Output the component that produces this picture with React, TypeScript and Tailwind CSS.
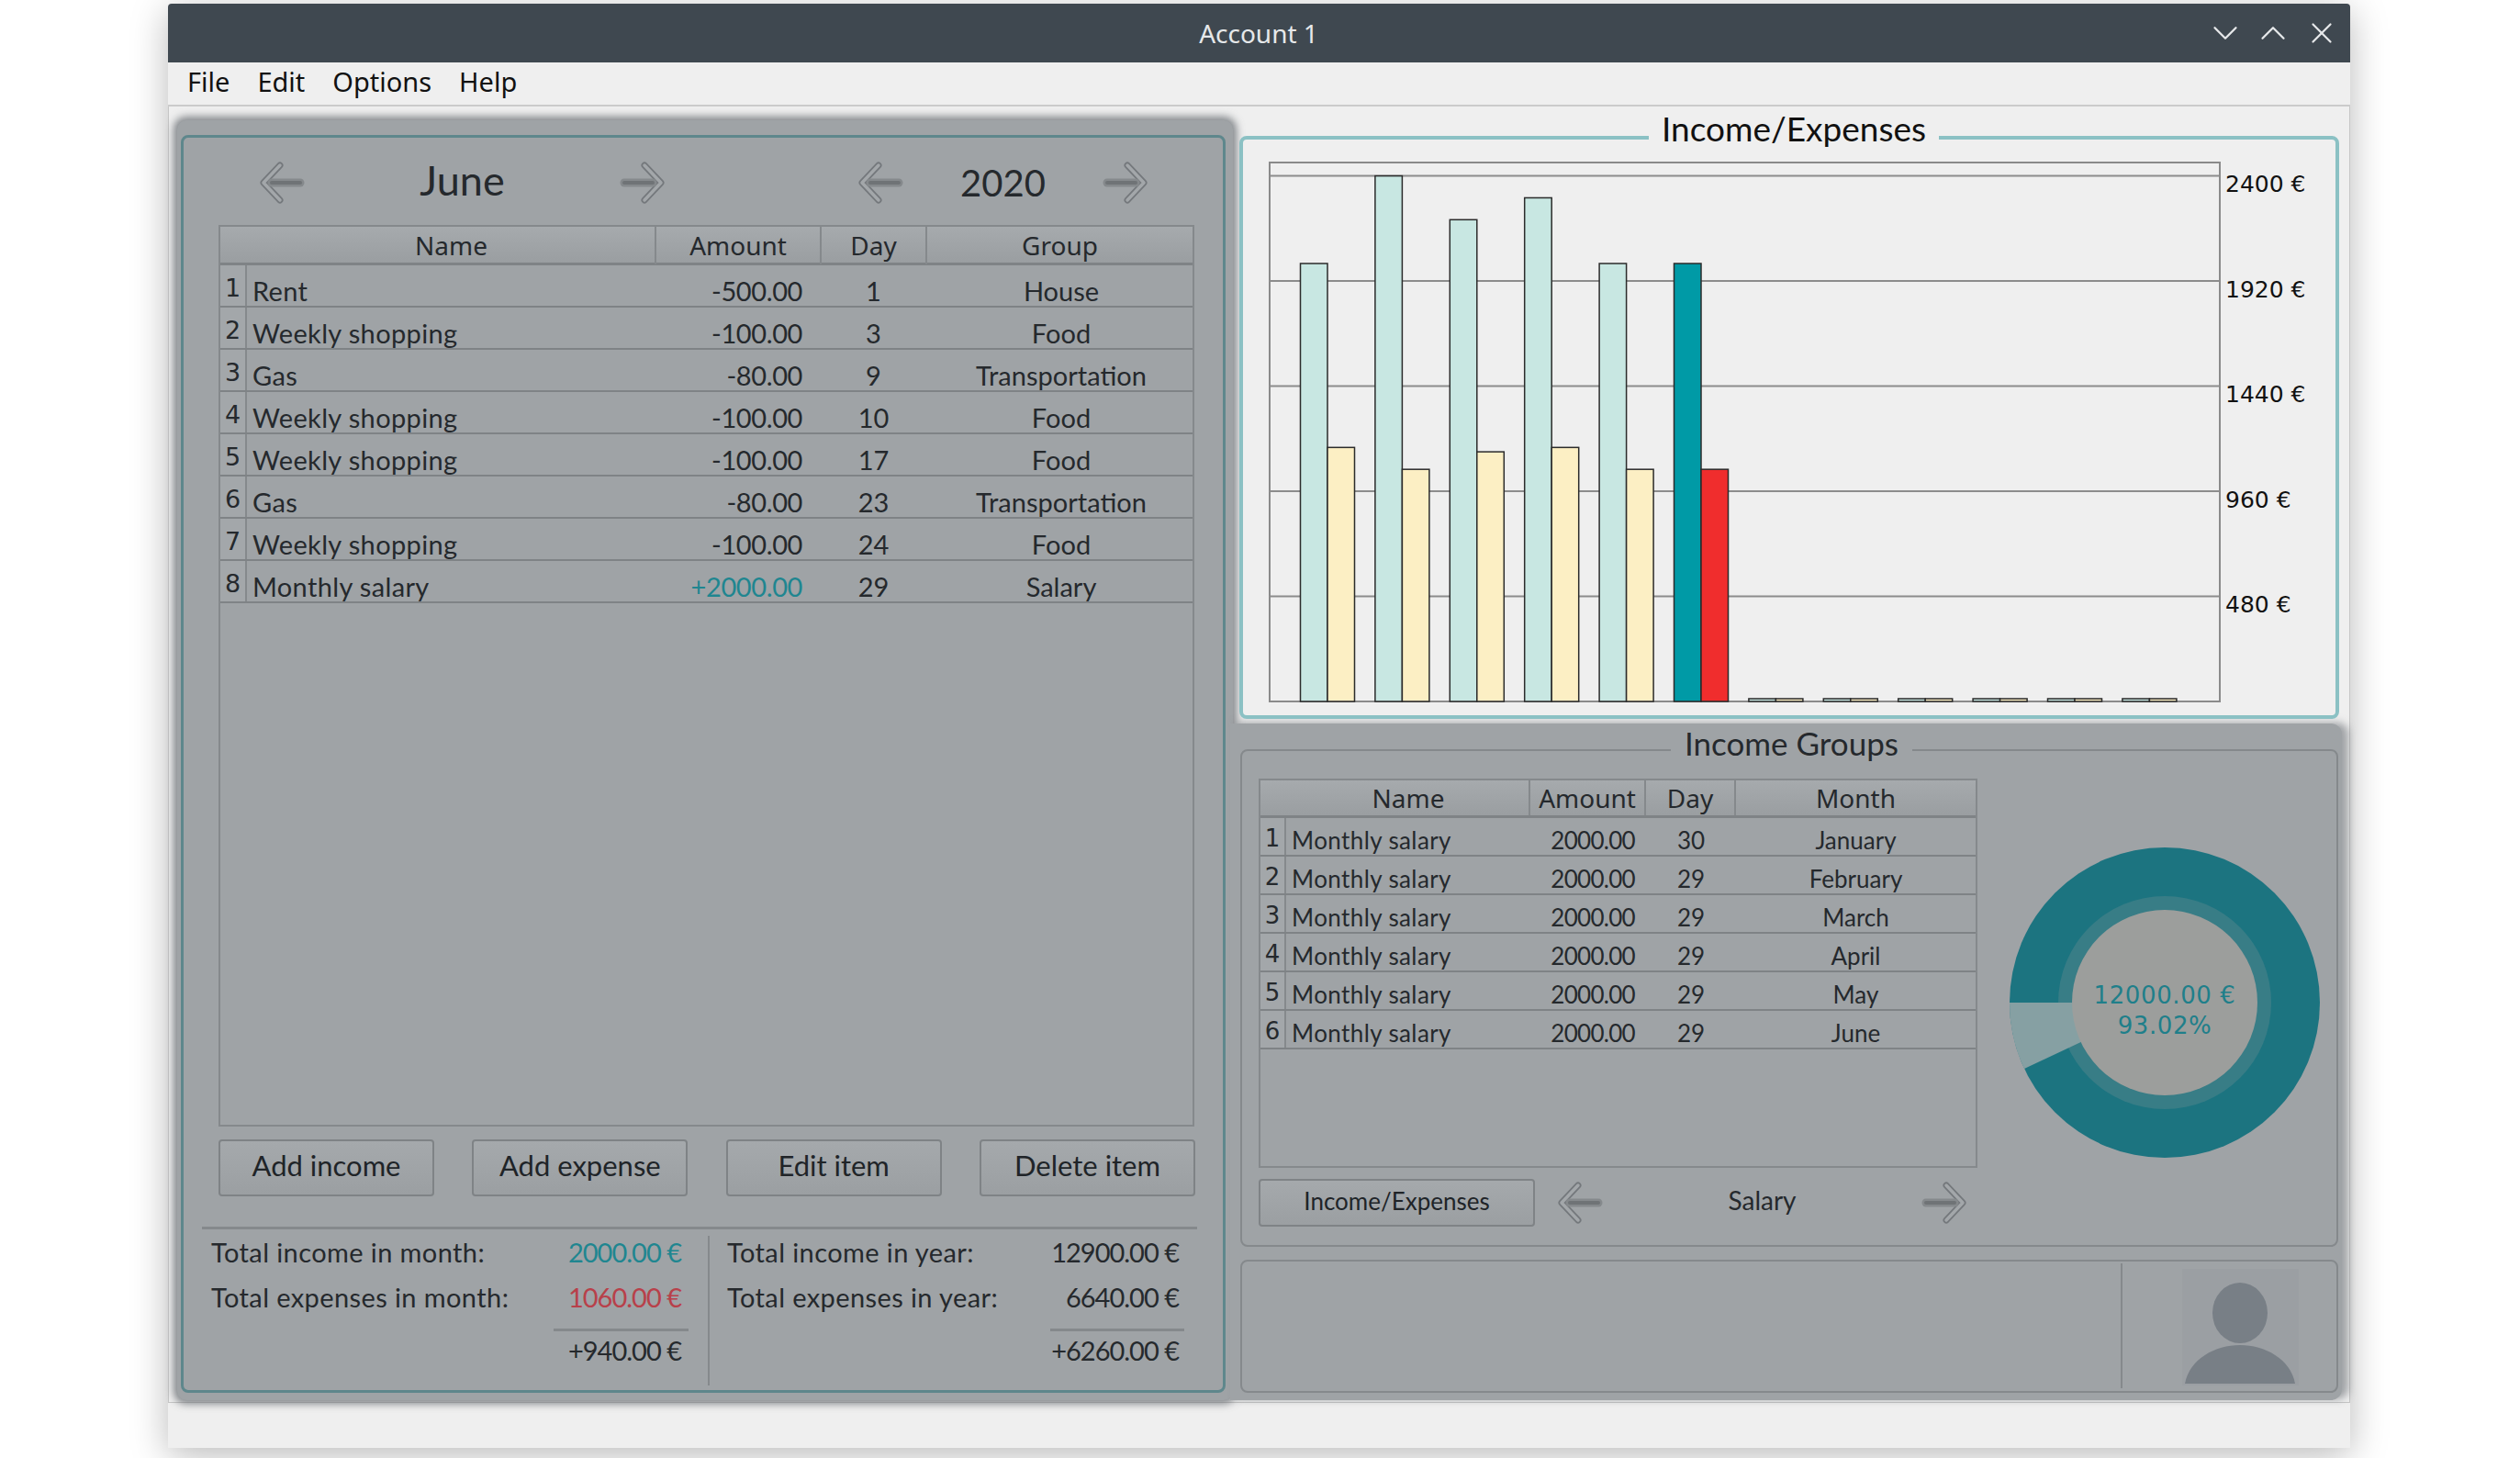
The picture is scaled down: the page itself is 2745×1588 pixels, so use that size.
import React from "react";
import { ChevronDown, ChevronUp, X } from "lucide-react";

const LEFT_ROWS = [
  ["Rent", "-500.00", "1", "House"],
  ["Weekly shopping", "-100.00", "3", "Food"],
  ["Gas", "-80.00", "9", "Transportation"],
  ["Weekly shopping", "-100.00", "10", "Food"],
  ["Weekly shopping", "-100.00", "17", "Food"],
  ["Gas", "-80.00", "23", "Transportation"],
  ["Weekly shopping", "-100.00", "24", "Food"],
  ["Monthly salary", "+2000.00", "29", "Salary"],
];

const GROUP_ROWS = [
  ["Monthly salary", "2000.00", "30", "January"],
  ["Monthly salary", "2000.00", "29", "February"],
  ["Monthly salary", "2000.00", "29", "March"],
  ["Monthly salary", "2000.00", "29", "April"],
  ["Monthly salary", "2000.00", "29", "May"],
  ["Monthly salary", "2000.00", "29", "June"],
];

const INCOME = [2000, 2400, 2200, 2300, 2000, 2000, 0, 0, 0, 0, 0, 0];
const EXPENSE = [1160, 1060, 1140, 1160, 1060, 1060, 0, 0, 0, 0, 0, 0];
const GRID = [2400, 1920, 1440, 960, 480];

const Arrow = ({ dir }: { dir: "left" | "right" }) => (
  <svg width="49" height="46" viewBox="0 0 49 46" fill="none" className={dir === "right" ? "-scale-x-100" : ""}>
    <path d="M22 4 L4 23 L22 42" stroke="#74787c" strokeWidth="7" strokeLinecap="round" strokeLinejoin="round" />
    <path d="M22 4 L4 23 L22 42" stroke="#a3a7aa" strokeWidth="3.5" strokeLinecap="round" strokeLinejoin="round" />
    <path d="M13 23 H44" stroke="#85898c" strokeWidth="9" strokeLinecap="round" />
    <path d="M13 23 H44" stroke="#6f7376" strokeWidth="4" strokeLinecap="round" />
  </svg>
);

const Button = ({ label, className }: { label: string; className: string }) => (
  <button className={`rounded-[4px] border-2 border-[#7f8386] bg-gradient-to-b from-[#a5a9ac] to-[#9b9fa2] text-[#202428] ${className}`}>
    {label}
  </button>
);

const BarChart = () => {
  const y = (v: number) => 588 - v * 0.2385;
  return (
    <svg width="1037" height="590" viewBox="0 0 1037 590" className="shrink-0">
      <rect x="1" y="1" width="1035" height="587" fill="none" stroke="#8a8a8a" strokeWidth="2" />
      {GRID.map((v) => (
        <line key={v} x1="1" x2="1036" y1={y(v)} y2={y(v)} stroke="#8c8c8c" strokeWidth="2" />
      ))}
      {INCOME.map((v, i) => {
        const x = 34.5 + i * 81.4;
        const active = i === 5;
        return (
          <g key={i} stroke="#2b2b2b" strokeWidth="1.5">
            <rect x={x} y={y(v) - (v ? 0 : 3)} width="29.5" height={v ? v * 0.2385 : 3} fill={active ? "#009aa6" : "#c8e7e2"} />
            <rect x={x + 29.5} y={y(EXPENSE[i]) - (EXPENSE[i] ? 0 : 3)} width="29.5" height={EXPENSE[i] ? EXPENSE[i] * 0.2385 : 3} fill={active ? "#f02d2d" : "#fcefc4"} />
          </g>
        );
      })}
    </svg>
  );
};

const Donut = () => (
  <div className="relative h-[338px] w-[338px] shrink-0">
    <svg width="338" height="338" viewBox="-169 -169 338 338">
      <circle r="169" fill="#1c7480" />
      <circle r="116" fill="#387d86" />
      <path d="M0 0 L-169 0 A169 169 0 0 0 -153 72 Z" fill="#86a0a3" />
      <circle r="101" fill="#9c9e9c" />
    </svg>
    <div className="absolute inset-0 flex flex-col items-center justify-center pt-[18px] font-['DejaVu_Sans',sans-serif] text-[26px] leading-[33px] tracking-[0.6px] text-[#1f7f8a]">
      <span>12000.00 €</span>
      <span>93.02%</span>
    </div>
  </div>
);

const App = () => {
  return (
    <div className="h-[1588px] w-[2745px] overflow-hidden bg-white font-['Lato',sans-serif]">
      <div className="ml-[183px] mt-[4px] flex h-[1573px] w-[2377px] flex-col rounded-t-[4px] bg-[#efefef] shadow-[0_8px_40px_rgba(0,0,0,0.28)]">
        {/* barre de titre */}
        <div className="flex h-[64px] shrink-0 items-center rounded-t-[4px] bg-[#3f4850] pr-[12px] text-white">
          <div className="flex-1 pl-[158px] text-center font-['Noto_Sans',sans-serif] text-[28px] text-[#e6e8ea]">Account 1</div>
          <div className="flex items-center text-[#e6e8ea]">
            <ChevronDown size={46} strokeWidth={1.2} />
            <ChevronUp size={46} strokeWidth={1.2} className="ml-[6px]" />
            <X size={38} strokeWidth={1.4} className="ml-[11px]" />
          </div>
        </div>

        {/* menu */}
        <div className="flex h-[48px] shrink-0 items-center gap-[30px] border-b-2 border-[#cbcbcb] pb-[5px] pl-[21px] font-['Noto_Sans',sans-serif] text-[29px] text-[#111]">
          <span>File</span>
          <span>Edit</span>
          <span>Options</span>
          <span>Help</span>
        </div>

        <div className="flex h-[1412px] shrink-0 border-x border-b border-[#c6c6c6]">
          {/* panneau gauche */}
          <div className="h-full w-[1161px] shrink-0 pb-[2px] pl-[9px] pr-[2px] pt-[15px]">
            <div className="h-full rounded-[10px] bg-[#9fa3a6] pb-[8px] pl-[4px] pr-[8px] pt-[16px] shadow-[0_0_9px_4px_rgba(95,100,105,0.75)]">
              <div className="flex h-full flex-col rounded-[8px] border-[3px] border-[#5e878c] px-[38px] text-[#25292d]">
                <div className="flex h-[95px] shrink-0 items-start pt-[26px]">
                  <div className="ml-[45px] flex w-[441px] items-center justify-between">
                    <Arrow dir="left" />
                    <span className="-mt-[6px] text-[45px] leading-[46px]">June</span>
                    <Arrow dir="right" />
                  </div>
                  <div className="ml-[211px] flex w-[315px] items-center justify-between">
                    <Arrow dir="left" />
                    <span className="text-[40px] leading-[46px]">2020</span>
                    <Arrow dir="right" />
                  </div>
                </div>

                {/* tableau des opérations */}
                <div className="h-[982px] w-[1063px] shrink-0 border-2 border-[#85898c]">
                  <div className="grid h-[42px] grid-cols-[475px_180px_115px_1fr] border-b-[3px] border-[#7f8386] bg-gradient-to-b from-[#a6aaad] to-[#9a9ea1] text-center font-['Noto_Sans',sans-serif] text-[28px] leading-[41px]">
                    <span className="border-r-2 border-[#85898c] pl-[30px]">Name</span>
                    <span className="border-r-2 border-[#85898c]">Amount</span>
                    <span className="border-r-2 border-[#85898c]">Day</span>
                    <span>Group</span>
                  </div>
                  {LEFT_ROWS.map((r, i) => (
                    <div key={i} className="grid h-[46px] grid-cols-[29px_445px_160px_136px_1fr] items-end border-b-2 border-[#7f8386] text-[29px] leading-[33px]">
                      <span className="h-full border-r-2 border-[#85898c] bg-[#a3a7aa] pt-[5px] text-center font-['DejaVu_Sans',sans-serif] text-[27px] leading-[39px]">{i + 1}</span>
                      <span className="pl-[6px] tracking-[0.35px]">{r[0]}</span>
                      <span className={`text-right tracking-[-0.4px] ${r[1].startsWith("+") ? "text-[#1f8690]" : ""}`}>{r[1]}</span>
                      <span className="pl-[19px] text-center">{r[2]}</span>
                      <span className="pl-[3px] text-center">{r[3]}</span>
                    </div>
                  ))}
                </div>

                <div className="mt-[14px] flex w-[1064px] shrink-0 justify-between text-[31px]">
                  <Button label="Add income" className="h-[62px] w-[235px] pb-[5px]" />
                  <Button label="Add expense" className="h-[62px] w-[235px] pb-[5px]" />
                  <Button label="Edit item" className="h-[62px] w-[235px] pb-[5px]" />
                  <Button label="Delete item" className="h-[62px] w-[235px] pb-[5px]" />
                </div>

                {/* totaux */}
                <div className="-ml-[18px] mt-[33px] flex h-[173px] w-[1084px] shrink-0 border-t-[3px] border-[#85898c] pt-[7px] text-[29px]">
                  <div className="flex w-[553px] flex-col border-r-2 border-[#85898c] pl-[10px] pr-[29px]">
                    <div className="-mt-[7px] flex h-[49px] items-center justify-between"><span className="tracking-[0.4px]">Total income in month:</span><span className="tracking-[-1px] text-[#1f8690]">2000.00 €</span></div>
                    <div className="flex h-[49px] items-center justify-between"><span className="tracking-[0.4px]">Total expenses in month:</span><span className="tracking-[-1px] text-[#b8404a]">1060.00 €</span></div>
                    <div className="-mr-[8px] ml-auto mt-[10px] w-[147px] border-t-[3px] border-[#85898c]" />
                    <div className="-mt-[1px] h-[44px] text-right leading-[44px] tracking-[-1px]">+940.00 €</div>
                  </div>
                  <div className="flex flex-1 flex-col pl-[19px] pr-[20px]">
                    <div className="-mt-[7px] flex h-[49px] items-center justify-between"><span className="tracking-[0.4px]">Total income in year:</span><span className="tracking-[-1px]">12900.00 €</span></div>
                    <div className="flex h-[49px] items-center justify-between"><span className="tracking-[0.4px]">Total expenses in year:</span><span className="tracking-[-1px]">6640.00 €</span></div>
                    <div className="-mr-[6px] ml-auto mt-[10px] w-[146px] border-t-[3px] border-[#85898c]" />
                    <div className="-mt-[1px] h-[44px] text-right leading-[44px] tracking-[-1px]">+6260.00 €</div>
                  </div>
                </div>
              </div>
            </div>
          </div>

          {/* colonne droite */}
          <div className="flex min-w-0 flex-1 flex-col">
            <div className="relative z-10 ml-[5px] mr-[11px] mt-[32px] flex h-[635px] shrink-0 rounded-[8px] border-[4px] border-[#8bc1c4] bg-[#efefef] pl-[28px] pt-[24px]">
              <span className="absolute left-[442px] top-[-32px] bg-[#efefef] px-[14px] text-[37px] leading-[40px] text-[#111]">Income/Expenses</span>
              <BarChart />
              <div className="ml-[5px] flex flex-col pt-[10px] font-['DejaVu_Sans',sans-serif] text-[25px] leading-[30px] text-[#111]">
                {GRID.map((v) => (
                  <span key={v} className="mb-[84.5px]">{v} €</span>
                ))}
              </div>
            </div>

            <div className="-ml-[5px] mb-[2px] mr-[8px] mt-[5px] flex flex-1 flex-col rounded-r-[12px] bg-[#9fa3a6] pb-[8px] pl-[11px] pr-[4px] pt-[28px] text-[#25292d] shadow-[7px_-1px_9px_0px_rgba(95,100,105,0.55)]">
              <div className="relative flex h-[542px] shrink-0 rounded-[8px] border-2 border-[#85898c] pl-[18px] pt-[30px]">
                <span className="absolute left-[467px] top-[-29px] bg-[#9fa3a6] px-[15px] text-[35px] leading-[40px]">Income Groups</span>
                <div className="flex w-[783px] shrink-0 flex-col">
                  <div className="h-[424px] border-2 border-[#85898c]">
                    <div className="grid h-[41px] grid-cols-[294px_126px_98px_1fr] border-b-[3px] border-[#7f8386] bg-gradient-to-b from-[#a6aaad] to-[#9a9ea1] text-center font-['Noto_Sans',sans-serif] text-[28px] leading-[38px]">
                      <span className="border-r-2 border-[#85898c] pl-[30px]">Name</span>
                      <span className="border-r-2 border-[#85898c]">Amount</span>
                      <span className="border-r-2 border-[#85898c]">Day</span>
                      <span>Month</span>
                    </div>
                    {GROUP_ROWS.map((r, i) => (
                      <div key={i} className="grid h-[42px] grid-cols-[28px_266px_114px_110px_1fr] items-end border-b-2 border-[#7f8386] text-[26px] leading-[32px]">
                        <span className="h-full border-r-2 border-[#85898c] bg-[#a3a7aa] pt-[4px] text-center font-['DejaVu_Sans',sans-serif] text-[26px] leading-[36px]">{i + 1}</span>
                        <span className="pl-[6px] tracking-[0.4px]">{r[0]}</span>
                        <span className="text-right tracking-[-0.7px]">{r[1]}</span>
                        <span className="pl-[12px] text-center">{r[2]}</span>
                        <span className="text-center">{r[3]}</span>
                      </div>
                    ))}
                  </div>
                  <div className="mt-[12px] flex items-center">
                    <Button label="Income/Expenses" className="h-[52px] w-[301px] pb-[4px] text-[26px]" />
                    <div className="ml-[25px] flex w-[445px] items-center justify-between">
                      <Arrow dir="left" />
                      <span className="mb-[6px] text-[28px]">Salary</span>
                      <Arrow dir="right" />
                    </div>
                  </div>
                </div>
                <div className="ml-[35px] mt-[75px]">
                  <Donut />
                </div>
              </div>

              <div className="mt-[14px] flex h-[145px] shrink-0 rounded-[8px] border-2 border-[#85898c]">
                <div className="mt-[2px] h-[136px] w-[959px] border-r-2 border-[#85898c]" />
                <div className="ml-[65px] mt-[8px] h-[127px] w-[127px] bg-[#9b9fa3]">
                  <svg width="127" height="127" viewBox="0 0 127 127">
                    <ellipse cx="63" cy="48" rx="30" ry="33" fill="#787f86" />
                    <path d="M3 125 C8 98 36 83 63 83 C90 83 118 98 123 125 Z" fill="#787f86" />
                  </svg>
                </div>
              </div>
            </div>
          </div>
        </div>
      </div>
    </div>
  );
};

export default App;
